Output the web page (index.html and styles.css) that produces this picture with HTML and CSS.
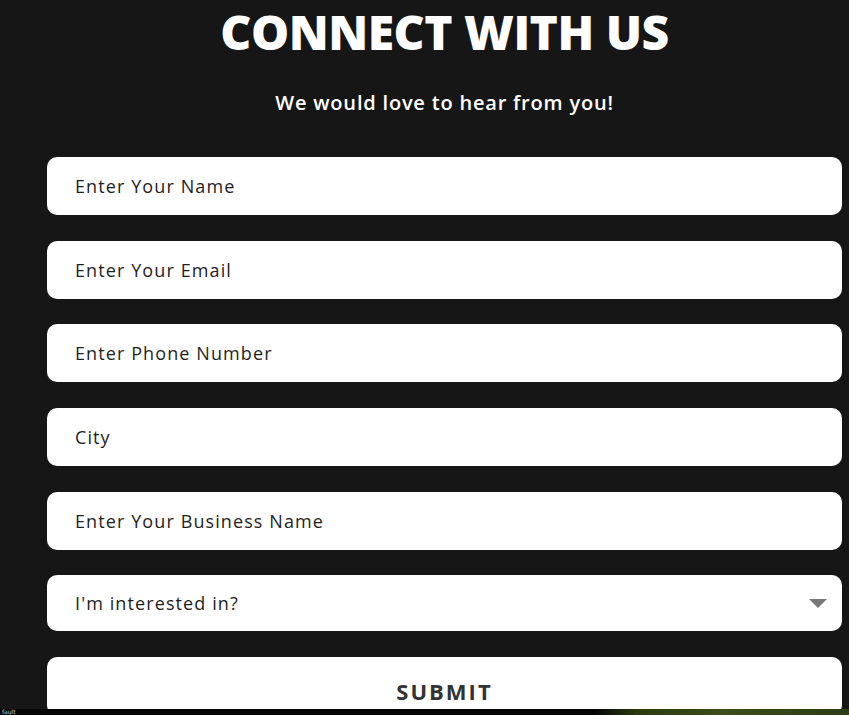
FILE: index.html
```html
<!DOCTYPE html>
<html>
<head>
<meta charset="utf-8">
<link rel="stylesheet" href="styles.css">
</head>
<body>
<div class="page">
  <section class="connect">
    <h1 class="title">CONNECT WITH US</h1>
    <p class="subtitle">We would love to hear from you!</p>
    <form class="form">
      <div class="field">Enter Your Name</div>
      <div class="field">Enter Your Email</div>
      <div class="field">Enter Phone Number</div>
      <div class="field">City</div>
      <div class="field">Enter Your Business Name</div>
      <div class="field select">
        <span>I'm interested in?</span>
        <svg class="caret" width="18" height="9" viewBox="0 0 18 9"><path d="M0 0H18L9 9Z" fill="#777"/></svg>
      </div>
      <div class="submit">SUBMIT</div>
    </form>
  </section>
  <div class="strip"><span class="strip-text">fault</span></div>
</div>
</body>
</html>
```
FILE: styles.css
```css
html, body {
  margin: 0;
  padding: 0;
  background: #161616;
  overflow: hidden;
}
.page {
  width: 849px;
  height: 715px;
  display: flex;
  flex-direction: column;
  overflow: hidden;
}
.connect {
  height: 709px;
  overflow: hidden;
  padding-left: 47px;
  padding-right: 7px;
  box-sizing: border-box;
  font-family: "Open Sans", "DejaVu Sans", sans-serif;
}
.title {
  margin: 0;
  padding-top: 4px;
  text-align: center;
  color: #fff;
  font-size: 48px;
  font-weight: 800;
  line-height: 56px;
  letter-spacing: -0.5px;
}
.subtitle {
  margin: 29px 0 0;
  text-align: center;
  color: #fff;
  font-size: 20px;
  font-weight: 600;
  line-height: 28px;
  letter-spacing: 0.8px;
}
.form {
  margin-top: 40px;
  display: flex;
  flex-direction: column;
  gap: 25.7px;
}
.field {
  height: 58px;
  background: #fff;
  border-radius: 10px;
  padding: 0 28px;
  display: flex;
  align-items: center;
  font-size: 18px;
  letter-spacing: 1.1px;
  color: #1e1e1e;
  flex-shrink: 0;
}
.select {
  height: 56px;
  justify-content: space-between;
  padding-right: 15px;
}
.submit {
  height: 58px;
  flex-shrink: 0;
  background: #fff;
  border-radius: 10px;
  display: flex;
  align-items: center;
  justify-content: center;
  padding-top: 10px;
  box-sizing: border-box;
  font-size: 22px;
  font-weight: 700;
  letter-spacing: 2px;
  color: #333;
}
.strip {
  height: 6px;
  background: linear-gradient(90deg, #050505 0%, #050505 70%, #2a3a10 75%, #3b4d18 85%, #2c3c14 100%);
  position: relative;
  overflow: hidden;
}
.strip-text {
  position: absolute;
  left: 2px;
  top: 0;
  font-family: "DejaVu Sans", sans-serif;
  font-size: 6px;
  line-height: 6px;
  color: #ccc;
}
```
